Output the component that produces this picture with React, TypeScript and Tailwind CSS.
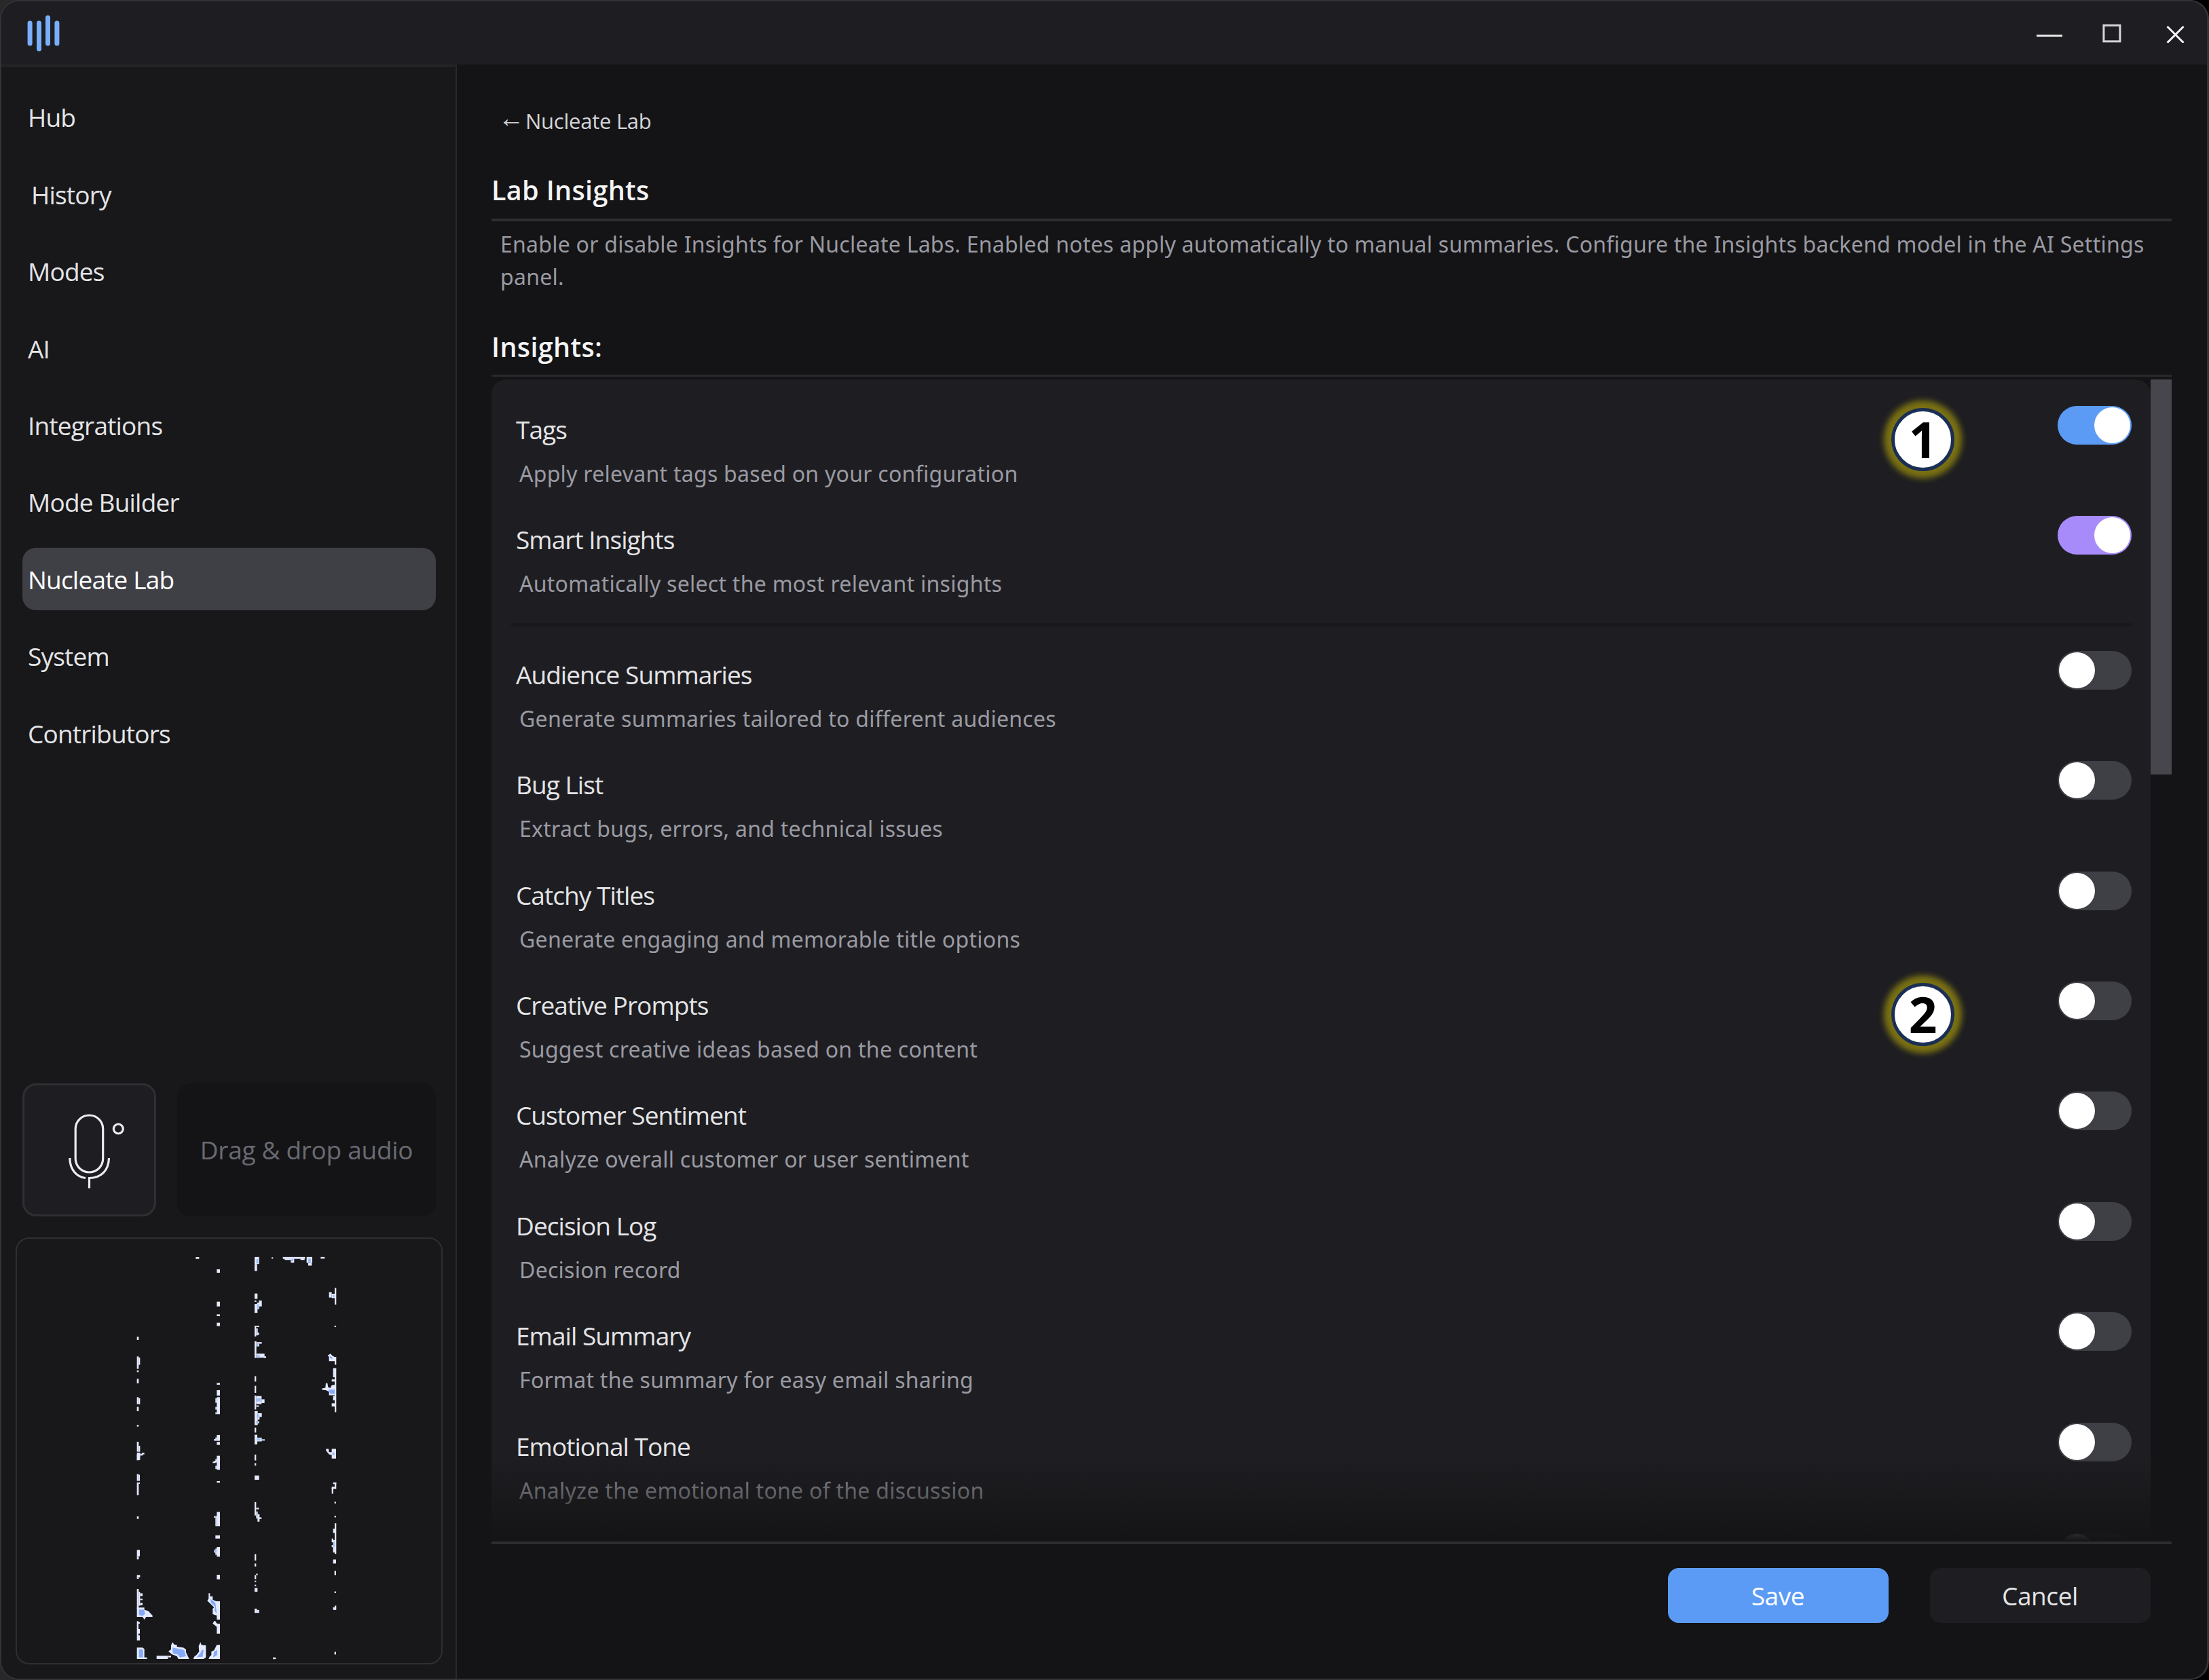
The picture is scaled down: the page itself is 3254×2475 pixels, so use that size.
import { useState } from 'react';

type Insight = {
	name: string;
	description: string;
};

const navItems = [
	'Hub',
	'History',
	'Modes',
	'AI',
	'Integrations',
	'Mode Builder',
	'Nucleate Lab',
	'System',
	'Contributors',
];

const insights: Insight[] = [
	{ name: 'Audience Summaries', description: 'Generate summaries tailored to different audiences' },
	{ name: 'Bug List', description: 'Extract bugs, errors, and technical issues' },
	{ name: 'Catchy Titles', description: 'Generate engaging and memorable title options' },
	{ name: 'Creative Prompts', description: 'Suggest creative ideas based on the content' },
	{ name: 'Customer Sentiment', description: 'Analyze overall customer or user sentiment' },
	{ name: 'Decision Log', description: 'Decision record' },
	{ name: 'Email Summary', description: 'Format the summary for easy email sharing' },
	{ name: 'Emotional Tone', description: 'Analyze the emotional tone of the discussion' },
];

// [x, y, width, height] of every speck in the visualizer
const leftTop = [
	[295, 36, 15, 8], [388, 90, 14, 15], [388, 233, 14, 21], [388, 289, 14, 8], [388, 326, 14, 15],
	[388, 592, 14, 8], [388, 624, 14, 24], [388, 655, 14, 75], [382, 660, 6, 20], [382, 698, 6, 12],
	[382, 722, 6, 8], [388, 822, 14, 26], [376, 840, 12, 8], [382, 833, 6, 7], [388, 853, 14, 13],
	[35, 388, 8, 14], [35, 475, 8, 55], [43, 480, 6, 32], [35, 537, 8, 7], [35, 574, 8, 20],
	[35, 655, 8, 31], [43, 660, 6, 26], [35, 698, 8, 19], [35, 778, 8, 7], [35, 852, 8, 44],
	[43, 870, 6, 26], [35, 908, 14, 25], [49, 905, 12, 8], [57, 901, 11, 7],
];

const leftBottom = [
	[388, 14, 14, 62], [376, 36, 12, 8], [370, 40, 12, 6], [382, 28, 6, 10], [382, 58, 6, 14],
	[388, 126, 14, 7], [388, 262, 14, 63], [382, 280, 6, 45], [376, 280, 6, 8], [382, 366, 20, 14],
	[388, 417, 14, 43], [376, 430, 12, 12], [382, 424, 6, 28], [388, 540, 14, 20],
	[35, 0, 14, 22], [35, 22, 8, 12], [35, 95, 8, 30], [43, 98, 5, 27], [35, 132, 8, 56],
	[43, 132, 5, 6], [35, 282, 8, 11], [35, 430, 13, 28], [35, 458, 8, 14], [35, 541, 14, 10],
	[35, 551, 8, 7], [35, 603, 8, 88], [43, 615, 6, 62], [49, 622, 11, 12], [49, 646, 11, 6],
	[49, 664, 11, 11], [35, 745, 7, 85], [42, 750, 6, 6], [42, 780, 6, 20], [42, 808, 6, 22],
	[122, 898, 50, 14], [172, 898, 14, 7],
];

const right = [
	[45, 30, 20, 26], [45, 56, 11, 26], [120, 31, 7, 5], [170, 30, 98, 7], [178, 36, 35, 5],
	[205, 37, 15, 14], [248, 36, 18, 5], [275, 30, 25, 22], [282, 52, 16, 10], [337, 30, 18, 6],
	[45, 166, 13, 20], [45, 192, 8, 5], [45, 205, 13, 33], [56, 200, 10, 24], [64, 192, 13, 22],
	[45, 286, 7, 40], [52, 286, 13, 5], [52, 296, 7, 26], [57, 312, 8, 8], [45, 344, 8, 62],
	[53, 347, 24, 6], [53, 353, 12, 10], [53, 390, 36, 15], [86, 400, 10, 6], [45, 474, 7, 20],
	[45, 510, 7, 26], [45, 546, 7, 52], [52, 548, 24, 30], [76, 560, 13, 14], [52, 583, 12, 5],
	[45, 604, 14, 52], [59, 612, 18, 14], [59, 626, 8, 10], [59, 642, 6, 8], [45, 666, 7, 18],
	[45, 692, 12, 36], [57, 703, 20, 14], [77, 709, 13, 5], [45, 766, 7, 22], [45, 798, 7, 9],
	[45, 844, 20, 16], [45, 943, 7, 50], [52, 964, 12, 6], [52, 978, 7, 26], [58, 988, 9, 28],
	[66, 1000, 10, 6], [45, 1137, 7, 24], [45, 1172, 7, 11], [52, 1210, 7, 5], [45, 1215, 7, 15],
	[45, 1236, 7, 5], [45, 1251, 7, 5], [45, 1263, 13, 14], [45, 1340, 10, 16], [55, 1345, 10, 11],
	[126, 1522, 13, 6], [399, 145, 7, 62], [374, 161, 12, 20], [386, 167, 13, 16], [398, 286, 7, 5],
	[399, 444, 7, 164], [392, 444, 7, 34], [386, 486, 13, 8], [392, 548, 7, 16], [386, 575, 13, 12],
	[392, 870, 14, 6], [399, 870, 7, 24], [386, 886, 13, 8], [386, 890, 7, 22], [398, 942, 7, 6],
	[398, 994, 7, 6], [399, 1022, 7, 114], [392, 1042, 7, 16], [386, 1079, 7, 14], [392, 1085, 7, 46],
	[386, 1103, 6, 8], [392, 1157, 13, 15], [398, 1199, 7, 16], [398, 1276, 7, 6], [399, 1329, 7, 16],
	[392, 1335, 8, 10], [398, 1501, 7, 10],
];

const rightAccents = [
	[53, 38, 8, 16], [282, 36, 12, 16], [206, 38, 10, 8], [56, 206, 8, 16], [54, 556, 18, 12],
	[54, 616, 10, 12], [55, 706, 16, 8], [388, 758, 10, 10], [390, 172, 8, 8], [54, 354, 6, 8],
	[54, 396, 14, 6], [394, 1090, 5, 20], [52, 640, 6, 10],
];

function Specks({ data, color }: { data: number[][]; color: string }) {
	return (
		<>
			{data.map(([x, y, w, h], i) => (
				<rect key={i} x={x} y={y} width={w} height={h} fill={color} />
			))}
		</>
	);
}

function Visualizer() {
	return (
		<svg width="624" height="625" viewBox="25 1825 624 625">
			<g transform="translate(190 1840) scale(0.3333)">
				<Specks data={leftTop} color="#e4eaff" />
			</g>
			<g transform="translate(190 2140) scale(0.3333)">
				<Specks data={leftBottom} color="#e4eaff" />
				<g fill="#e4eaff">
					<path d="M352 622h6v13h12v15l15 7h17v81h-14v-18l-18-6v-24l6-6-12-12-18-17 6-10z" />
					<path d="M376 745h6l6 10 14 2v43h-14v-30l-6-5-12-9z" />
					<path d="M388 850h14v62h-50l4-10 8-7v-15l12-6 6-12z" />
					<path d="M316 838l4 12 20 2v53l-10 7h-46l6-12 8-5 12-15-2-25z" />
					<path d="M192 838l8 10 12 2v8l28 4 12 8v12l14 30h-48l-6-12-22-8-16-14 12-8v-18z" />
					<path d="M35 862h25l8 6v37h12v7H35z" />
					<path d="M35 685h33v10l17 5 19 20v6H76l-8 12-8-12H35z" />
				</g>
				<g fill="#86aaf8">
					<path d="M360 648l12 7 10 10 6 47-10-12 2-20-18-16z" />
					<path d="M376 880l14-8v23l-18 10z" />
					<path d="M322 872h8l-4 30-26 2 16-19z" />
					<path d="M192 862l23 4 29 6 8 28-27 5-10-13-21-4z" />
					<path d="M44 870h18v35H44z" />
					<path d="M44 694h22l6 18-12 10-16-4z" />
					<path d="M380 432h6v6h-6z" />
				</g>
			</g>
			<g transform="translate(360 1840) scale(0.3333 0.3954)">
				<Specks data={right} color="#e4eaff" />
				<g fill="#e4eaff">
					<path d="M368 397l12-7 8 7 10 5h8v29h-7v-13h-25v-16z" />
					<path d="M343 520l15-3 2-17h7l3 15 10 3 6-10 13-2v39h-25v-13l-14-6-17-1z" />
					<path d="M361 745h11l2 12h12v-12h19v36h-19v-13l-12-3-13-13z" />
				</g>
				<g fill="#86aaf8">
					<path d="M372 524h27v16h-19z" />
					<path d="M376 397l14 8-2 6-10-6z" />
				</g>
				<Specks data={rightAccents} color="#9dbcfb" />
			</g>
		</svg>
	);
}

function Toggle({ on, color, onClick }: { on: boolean; color?: string; onClick?: () => void }) {
	return (
		<button
			onClick={onClick}
			className={`flex items-center shrink-0 w-[109px] h-[57px] px-[2px] rounded-full ${
				on ? `justify-end ${color ?? 'bg-[#5b9bf5]'}` : 'justify-start bg-[#3f3f46]'
			}`}
		>
			<span className="w-[53px] h-[53px] rounded-full bg-white"></span>
		</button>
	);
}

function InsightRow({ item, on, color, onClick }: { item: Insight; on: boolean; color?: string; onClick: () => void }) {
	return (
		<div className="flex justify-between items-start h-[162.4px] shrink-0">
			<div className="pt-[10px]">
				<div className="text-[37px] leading-[50px] tracking-[-0.95px] text-[#e4e4e7]">{item.name}</div>
				<div className="mt-[18px] pl-[5px] font-['Noto_Sans',sans-serif] text-[32px] leading-[44px] tracking-[0.27px] text-[#9a9aa2]">
					{item.description}
				</div>
			</div>
			<Toggle on={on} color={color} onClick={onClick} />
		</div>
	);
}

function Marker({ label, className }: { label: string; className: string }) {
	return (
		<div
			className={`absolute flex items-center justify-center w-[93px] h-[93px] pb-[3px] rounded-full border-[5px] border-[#1b2f55] bg-white text-black text-[73px] leading-none font-bold shadow-[0_0_8px_11px_#7a7113] ${className}`}
		>
			{label}
		</div>
	);
}

export default function App() {
	const [active, setActive] = useState('Nucleate Lab');
	const [enabled, setEnabled] = useState<string[]>(['Tags', 'Smart Insights']);

	const toggle = (name: string) => {
		setEnabled((prev) => (prev.includes(name) ? prev.filter((n) => n !== name) : [...prev, name]));
	};

	return (
		<div className="w-[3254px] h-[2475px] bg-linear-to-r from-[#282828] from-50% to-black to-50% font-['Open_Sans',sans-serif]">
			<div className="flex flex-col w-full h-full rounded-[28px] border-2 border-r-[3px] border-[#343438] bg-[#141416] overflow-hidden">
				{/* Title bar */}
				<header className="flex items-center justify-between h-[93px] shrink-0 pl-[38px] pr-[32px] bg-[#1e1e22]">
					<svg width="48" height="54" viewBox="0 0 48 54" fill="#78aefb">
						<rect x="0.6" y="8.5" width="7" height="37" rx="3.5" />
						<rect x="14" y="8.5" width="7" height="45" rx="3.5" />
						<rect x="27" y="0.5" width="7" height="45" rx="3.5" />
						<rect x="40.4" y="8.5" width="7" height="37" rx="3.5" />
					</svg>
					<div className="flex items-center">
						<svg width="38" height="30" viewBox="0 0 38 30" className="mr-[59px]">
							<path d="M0 18.5h38" stroke="#e8e8e8" strokeWidth="3" />
						</svg>
						<svg width="28" height="28" viewBox="0 0 28 28" fill="none" className="mr-[66px]">
							<rect x="1.9" y="2.4" width="24" height="23.5" stroke="#d6d6d8" strokeWidth="3" />
						</svg>
						<svg width="28" height="28" viewBox="0 0 28 28">
							<path d="M1.5 4l24 24M25.5 4l-24 24" stroke="#f4f4f5" strokeWidth="3" />
						</svg>
					</div>
				</header>

				<div className="flex flex-1 min-h-0">
					{/* Sidebar */}
					<aside className="flex flex-col w-[671px] shrink-0 border-t-4 border-r-2 border-t-[#232326] border-r-[#29292c] bg-[#18181a] pt-[17px] pb-[21px]">
						<nav className="pl-[31px] pr-[29px]">
							{navItems.map((item) => (
								<div key={item} className="flex items-center h-[113.4px]">
									<button
										onClick={() => setActive(item)}
										className={`w-full h-[92px] rounded-[20px] pt-px text-left text-[37px] tracking-[-0.8px] ${
											item === active ? 'bg-[#3f3f46] text-white' : 'text-[#e4e4e7]'
										} ${item === 'History' ? 'pl-[13px]' : 'pl-[8px]'}`}
									>
										{item}
									</button>
								</div>
							))}
						</nav>

						<div className="mt-auto flex gap-[31px] px-[31px]">
							<button className="flex items-center justify-center shrink-0 w-[197px] h-[196px] rounded-[20px] border-[3px] border-[#2f2f33] bg-[#1e1e22]">
								<svg width="104" height="120" viewBox="83 1633.5 104 120" fill="none" stroke="#ececee" strokeWidth="3.2" className="shrink-0 ml-[7px]">
									<rect x="111.2" y="1642.5" width="40.5" height="84" rx="20.25" />
									<circle cx="174.3" cy="1662.5" r="7" />
									<path d="M102.8 1705.5C103 1722 112 1733 126 1735" />
									<path d="M160.5 1705.5C160 1724 149 1735 131.5 1735V1750" />
								</svg>
							</button>
							<div className="flex items-center justify-center w-[381px] h-[196px] shrink-0 rounded-[20px] bg-[#141416] text-[37px] tracking-[-0.3px] text-[#6a6a72]">
								Drag &amp; drop audio
							</div>
						</div>

						<div className="mt-[31px] ml-[21px] w-[629px] h-[629px] shrink-0 rounded-[20px] border-2 border-[#2f2f33]">
							<Visualizer />
						</div>
					</aside>

					{/* Content */}
					<main className="relative flex flex-col flex-1 pl-[51px] pr-[52.5px]">
						<button className="flex items-center self-start mt-[61px] pl-[10px] h-[44px] text-[31px] tracking-[-0.25px] text-[#d4d4d8]">
							<span className="relative top-[-6px] w-[40px] text-left text-[38px] leading-[44px]">←</span>
							<span>Nucleate Lab</span>
						</button>

						<h1 className="mt-[53px] pb-[15px] border-b-4 border-[#2e2e31] text-[39.5px] leading-[54px] font-semibold tracking-[0.35px] text-[#f4f4f5]">
							Lab Insights
						</h1>
						<p className="mt-[10px] pl-[13px] -mr-2 font-['Noto_Sans',sans-serif] text-[32px] leading-[47.5px] tracking-[0.25px] text-[#9a9aa2]">
							Enable or disable Insights for Nucleate Labs. Enabled notes apply automatically to manual
							summaries. Configure the Insights backend model in the AI Settings
							<br />
							panel.
						</p>

						<h2 className="mt-[53px] pb-[14px] border-b-[3px] border-[#29292c] text-[39.5px] leading-[54px] font-semibold tracking-[0.35px] text-[#f4f4f5]">
							Insights:
						</h2>

						<div className="flex mt-[4px] h-[1712px] shrink-0">
							<div className="relative flex-1 overflow-hidden rounded-t-[22px] bg-[#1e1e22] pt-[39px] pl-[36px] pr-[28px]">
								<InsightRow
									item={{ name: 'Tags', description: 'Apply relevant tags based on your configuration' }}
									on={enabled.includes('Tags')}
									onClick={() => toggle('Tags')}
								/>
								<InsightRow
									item={{ name: 'Smart Insights', description: 'Automatically select the most relevant insights' }}
									on={enabled.includes('Smart Insights')}
									color="bg-[#a78bfa]"
									onClick={() => toggle('Smart Insights')}
								/>
								<div className="-mt-[5px] -ml-[8px] mb-[36px] h-[5px] bg-[#19191b]"></div>
								{insights.map((item) => (
									<InsightRow
										key={item.name}
										item={item}
										on={enabled.includes(item.name)}
										onClick={() => toggle(item.name)}
									/>
								))}
								<div className="flex justify-end">
									<Toggle on={false} />
								</div>

								<Marker label="1" className="top-[42px] left-[2062px]" />
								<Marker label="2" className="top-[889px] left-[2062px]" />
								<div className="absolute inset-x-0 bottom-0 h-[124px] bg-linear-to-b from-[#141416]/0 to-[#141416]"></div>
							</div>
							<div className="w-[31px]">
								<div className="h-[582px] bg-[#47464c]"></div>
							</div>
						</div>

						<footer className="flex justify-end gap-[61px] border-t-4 border-[#2e2e31] pt-[35px] pr-[31px] text-[37px] tracking-[-0.4px]">
							<button className="w-[325px] h-[81px] rounded-[16px] bg-[#5b9bf5] text-white">Save</button>
							<button className="w-[325px] h-[81px] rounded-[16px] bg-[#1e1e22] text-[#e4e4e7]">Cancel</button>
						</footer>
					</main>
				</div>
			</div>
		</div>
	);
}
